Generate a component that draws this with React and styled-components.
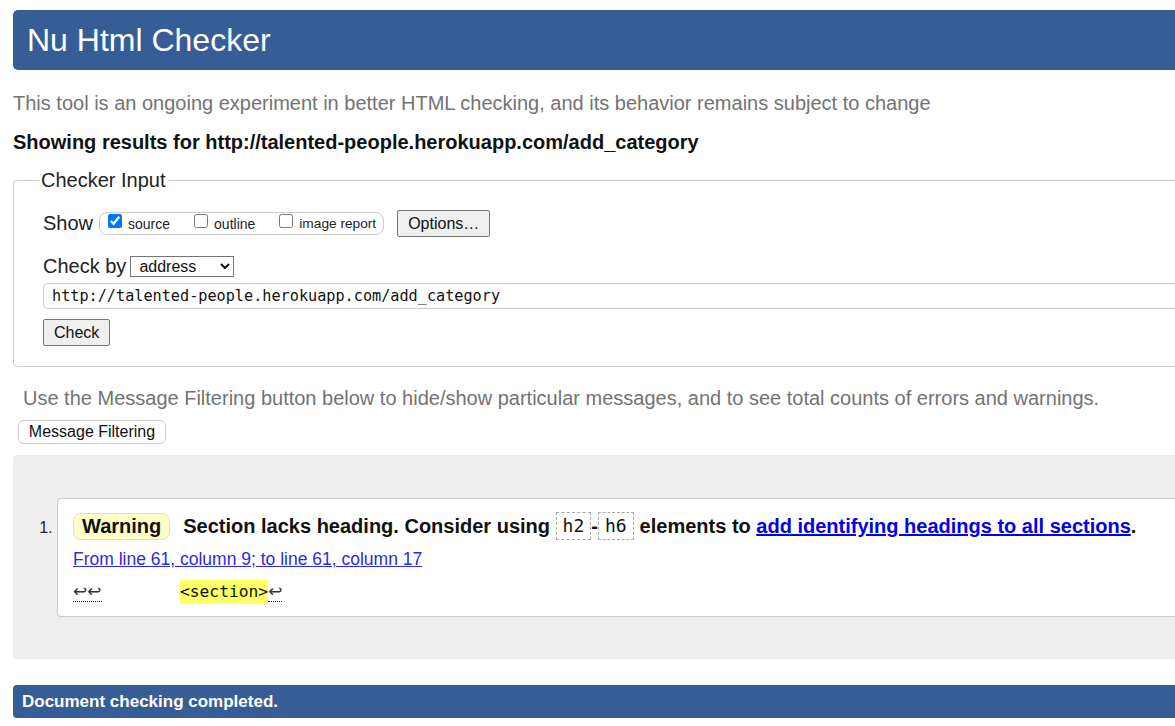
import React from 'react';
import styled, { createGlobalStyle } from 'styled-components';

const GlobalStyle = createGlobalStyle`
  html, body {
    margin: 0;
    padding: 0;
    overflow: hidden;
    background: #fff;
  }
  body {
    font-family: "Liberation Sans", Arial, sans-serif;
    color: #222;
  }
`;

const Page = styled.div`
  width: 1200px;
  padding: 10px 0 0 13px;
`;

const Header = styled.h1`
  margin: 0;
  height: 60px;
  line-height: 60px;
  padding-left: 14px;
  background: #365d95;
  border-radius: 5px;
  color: #fff;
  font-size: 32px;
  font-weight: normal;
`;

const Intro = styled.p`
  margin: ${({ $top }) => $top}px 0 0;
  font-size: 20px;
  line-height: 22px;
  color: #737373;
  padding-left: ${({ $indent }) => $indent || 0}px;
`;

const Showing = styled.p`
  margin: 17px 0 0;
  font-size: 20px;
  line-height: 22px;
  font-weight: bold;
  color: #111;
`;

const Fieldset = styled.fieldset`
  margin: 16px 0 0;
  padding: 0 0 20px 29px;
  border: 1px solid #ccc;
  border-radius: 4px;
`;

const Legend = styled.legend`
  margin-left: -4px;
  padding: 0 2px;
  font-size: 20px;
  line-height: 22px;
  color: #222;
`;

const Row = styled.div`
  display: flex;
  align-items: center;
  margin-top: ${({ $top }) => $top}px;
  font-size: 20px;
`;

const Label = styled.span`
  margin-right: ${({ $gap }) => $gap}px;
`;

const CheckGroup = styled.div`
  display: flex;
  align-items: center;
  height: 21px;
  padding: 0 7px 0 8px;
  border: 1px solid #ccc;
  border-radius: 8px;
  font-size: 14px;
  margin-right: 13px;
`;

const CheckItem = styled.label`
  display: flex;
  align-items: center;
  margin-right: ${({ $gap }) => $gap || 0}px;
  font-size: ${({ $size }) => $size || 14}px;

  input {
    margin: 0 6px 0 0;
    width: 14px;
    height: 14px;
    accent-color: #0075ff;
    position: relative;
    top: -3px;
  }
`;

const Button = styled.button`
  font-family: "Liberation Sans", Arial, sans-serif;
  font-size: 16px;
  height: 27px;
  padding: 0 ${({ $pad }) => $pad || 9}px;
  color: #111;
  background: #efefef;
  border: 1px solid #767676;
  border-radius: 2px;
`;

const Select = styled.select`
  font-family: "Liberation Sans", Arial, sans-serif;
  font-size: 16px;
  width: 104px;
  height: 21px;
  margin-left: 4px;
  padding: 0 0 0 4px;
  border: 1px solid #767676;
  border-radius: 0;
  background: #fff;
  color: #111;
`;

const UrlInput = styled.div`
  margin-top: 5px;
  height: 24px;
  line-height: 24px;
  padding-left: 8px;
  border: 1px solid #ccc;
  border-right: none;
  border-radius: 5px 0 0 5px;
  font-family: "DejaVu Sans Mono", "Liberation Mono", monospace;
  font-size: 15.2px;
  color: #111;
`;

const CheckRow = styled.div`
  margin-top: 10px;
`;

const FilterButton = styled.button`
  margin: 11px 0 0 5px;
  height: 24px;
  width: 148px;
  padding: 0;
  font-family: "Liberation Sans", Arial, sans-serif;
  font-size: 16px;
  color: #111;
  background: #fff;
  border: 1px solid #ccc;
  border-radius: 6px;
`;

const Results = styled.div`
  margin-top: 11px;
  background: #eee;
  border-radius: 4px;
  padding: 43px 0 42px 44px;
`;

const List = styled.ol`
  margin: 0;
  padding: 0;
  list-style: decimal;
  font-size: 16px;
`;

const Message = styled.li`
  background: #fff;
  border: 1px solid #ccc;
  border-right: none;
  border-radius: 4px 0 0 4px;
  padding: 13px 0 14px 15px;

  &::marker {
    font-size: 16px;
    color: #222;
  }
`;

const MessageLine = styled.p`
  margin: 0;
  display: flex;
  align-items: center;
  height: 28px;
  font-size: 20px;
  font-weight: bold;
  color: #111;
  line-height: 28px;
  white-space: pre;
`;

const Badge = styled.span`
  display: inline-block;
  height: 25px;
  line-height: 25px;
  padding: 0 8px;
  margin-right: 13px;
  background: #ffffc8;
  border: 1px solid #ddd;
  border-radius: 8px;
`;

const Code = styled.code`
  display: inline-block;
  height: 26px;
  line-height: 26px;
  padding: 0 6px;
  border: 1px dashed #aaa;
  font-family: "DejaVu Sans Mono", "Liberation Mono", monospace;
  font-size: 18px;
  font-weight: normal;
  margin: 0 ${({ $mr }) => $mr || 0}px 0 0;
`;

const BoldLink = styled.a`
  color: #0000ee;
  text-decoration: underline;
`;

const Location = styled.a`
  display: inline-block;
  margin-top: 9px;
  font-size: 17.5px;
  line-height: 20px;
  color: #2a2aee;
  text-decoration: underline;
`;

const Extract = styled.p`
  margin: 12px 0 0;
  font-family: "DejaVu Sans Mono", "Liberation Mono", monospace;
  font-size: 16.3px;
  line-height: 20px;
  white-space: pre;
  color: #111;
`;

const LineBreak = styled.span`
  font-family: "DejaVu Sans", sans-serif;
  font-size: 17px;
  color: #333;
  border-bottom: 1px dotted #111;
`;

const Highlight = styled.b`
  font-weight: normal;
  background: #ffff66;
  padding: 2px 0 3px;
`;

const Footer = styled.div`
  margin-top: 26px;
  height: 33px;
  line-height: 33px;
  padding-left: 9px;
  background: #365d95;
  border-radius: 4px;
  color: #fff;
  font-size: 17px;
  font-weight: bold;
`;

const url = 'http://talented-people.herokuapp.com/add_category';

export default function App() {
  return (
    <Page>
      <GlobalStyle />
      <Header>Nu Html Checker</Header>
      <Intro $top={22}>
        This tool is an ongoing experiment in better HTML checking, and its behavior remains subject to change
      </Intro>
      <Showing>Showing results for {url}</Showing>

      <Fieldset>
        <Legend>Checker Input</Legend>
        <Row $top={19}>
          <Label $gap={6}>Show</Label>
          <CheckGroup>
            <CheckItem $gap={24}>
              <input type="checkbox" defaultChecked />
              source
            </CheckItem>
            <CheckItem $gap={24}>
              <input type="checkbox" />
              outline
            </CheckItem>
            <CheckItem $size={13.7}>
              <input type="checkbox" />
              image report
            </CheckItem>
          </CheckGroup>
          <Button $pad={10}>Options…</Button>
        </Row>
        <Row $top={18}>
          <Label $gap={0}>Check by</Label>
          <Select defaultValue="address">
            <option value="address">address</option>
            <option value="file">file upload</option>
            <option value="text">text input</option>
          </Select>
        </Row>
        <UrlInput>{url}</UrlInput>
        <CheckRow>
          <Button $pad={10}>Check</Button>
        </CheckRow>
      </Fieldset>

      <Intro $top={20} $indent={10}>
        Use the Message Filtering button below to hide/show particular messages, and to see total counts of errors and warnings.
      </Intro>
      <FilterButton>Message Filtering</FilterButton>

      <Results>
        <List>
          <Message>
            <MessageLine>
              <Badge>Warning</Badge>
              {'Section lacks heading. Consider using '}
              <Code>h2</Code>
              -
              <Code $mr={6}>h6</Code>
              {'elements to '}
              <BoldLink href="#">add identifying headings to all sections</BoldLink>.
            </MessageLine>
            <Location href="#">From line 61, column 9; to line 61, column 17</Location>
            <Extract>
              <LineBreak>↩↩</LineBreak>
              {'        '}
              <Highlight>&lt;section&gt;</Highlight>
              <LineBreak>↩</LineBreak>
            </Extract>
          </Message>
        </List>
      </Results>

      <Footer>Document checking completed.</Footer>
    </Page>
  );
}
